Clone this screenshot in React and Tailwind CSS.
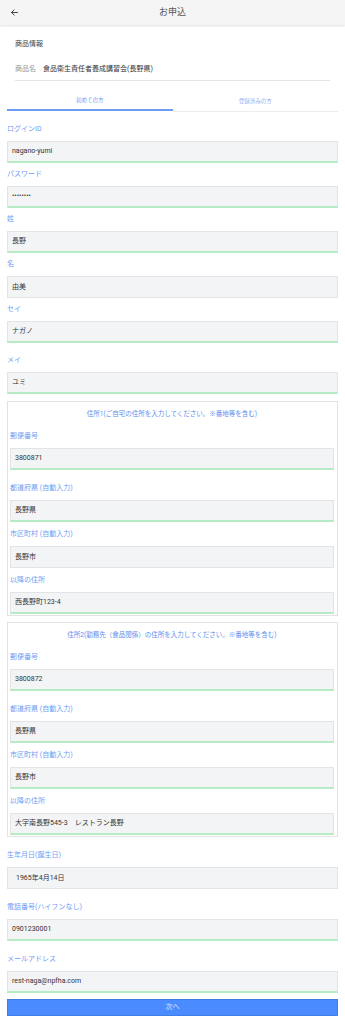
import React from "react";

const FONT = { fontFamily: 'Roboto, "Noto Sans CJK JP", sans-serif' };

function Field({ label, value, green = true, mt = "mt-[5px]", pl = "pl-[4px]" }) {
  return (
    <div className={mt}>
      <div className="h-[12px] leading-[12px] text-[7px] text-[#6f9cf3]">{label}</div>
      <div
        className={
          "mt-[6px] h-[22px] flex items-center bg-[#f3f4f6] border border-[#e3e4e7] text-[7px] text-[#333] " +
          pl +
          (green ? " border-b-2 border-b-[#b6ebc5]" : "")
        }
      >
        {value}
      </div>
    </div>
  );
}

function AddressBox({ title, zip, rest, cityGreen, mt }) {
  return (
    <div className={"border border-[#e2e2e2] pt-[7px] pb-[1px] pl-[2px] pr-[3px] " + mt}>
      <div className="h-[10px] leading-[10px] text-center text-[6.5px] text-[#5b8ef0]">{title}</div>
      <Field label="郵便番号" value={zip} mt="mt-[11px]" />
      <Field label="都道府県 (自動入力)" value="長野県" mt="mt-[12px]" />
      <Field label="市区町村 (自動入力)" value="長野市" green={cityGreen} mt="mt-[6px]" />
      <Field label="以降の住所" value={rest} mt="mt-[6px]" />
    </div>
  );
}

export default function App() {
  return (
    <div className="w-[345px] bg-white min-h-[1024px]" style={FONT}>
      <div className="relative h-[25px] bg-[#f5f5f5] shadow-[0_1px_2px_rgba(0,0,0,0.12)] flex items-center justify-center">
        <svg className="absolute left-[10px] top-[8px]" width="9" height="9" viewBox="0 0 24 24" fill="none" stroke="#333" strokeWidth="2.4" strokeLinecap="round" strokeLinejoin="round">
          <path d="M20 12H4" />
          <path d="M11 5l-7 7 7 7" />
        </svg>
        <span className="text-[9px] text-[#555]">お申込</span>
      </div>

      <div className="px-[7px]">
        <div className="px-[8px]">
          <div className="mt-[13px] h-[12px] leading-[12px] text-[7px] text-[#444]">商品情報</div>
          <div className="mt-[13px] pb-[5px] border-b border-[#e6e6e6] flex text-[7px] leading-[12px]">
            <span className="text-[#999] w-[28px]">商品名</span>
            <span className="text-[#333]">食品衛生責任者養成講習会(長野県)</span>
          </div>
        </div>

        <div className="mt-[10px] flex">
          <div className="flex-1 h-[20px] flex items-center justify-center text-[5.5px] text-[#6f9cf3] border-b-2 border-[#6f9cf3]">初めての方</div>
          <div className="flex-1 h-[20px] flex items-center justify-center text-[5.5px] text-[#8fb0f0] border-b border-[#ececec] mt-[1px]">登録済みの方</div>
        </div>

        <Field label="ログインID" value="nagano-yumi" mt="mt-[11px]" />
        <Field label="パスワード" value="••••••••" />
        <Field label="姓" value="長野" />
        <Field label="名" value="由美" green={false} />
        <Field label="セイ" value="ナガノ" />
        <Field label="メイ" value="ユミ" mt="mt-[11px]" />

        <AddressBox
          mt="mt-[7px]"
          title="住所1(ご自宅の住所を入力してください。※番地等を含む)"
          zip="3800871"
          cityGreen={false}
          rest="西長野町123-4"
        />
        <AddressBox
          mt="mt-[6px]"
          title="住所2(勤務先（食品関係）の住所を入力してください。※番地等を含む)"
          zip="3800872"
          cityGreen={true}
          rest="大字南長野545-3　レストラン長野"
        />

        <Field label="生年月日(誕生日)" value="1965年4月14日" green={false} mt="mt-[12px]" pl="pl-[8px]" />
        <Field label="電話番号(ハイフンなし)" value="0901230001" mt="mt-[12px]" />
        <Field label="メールアドレス" value="rest-naga@npfha.com" mt="mt-[12px]" />

        <div className="mt-[6px] h-[17px] bg-[#4a8cff] border border-[#3f7de8] flex items-center justify-center text-[7px] text-[#dce8ff]">
          次へ
        </div>
      </div>
    </div>
  );
}
